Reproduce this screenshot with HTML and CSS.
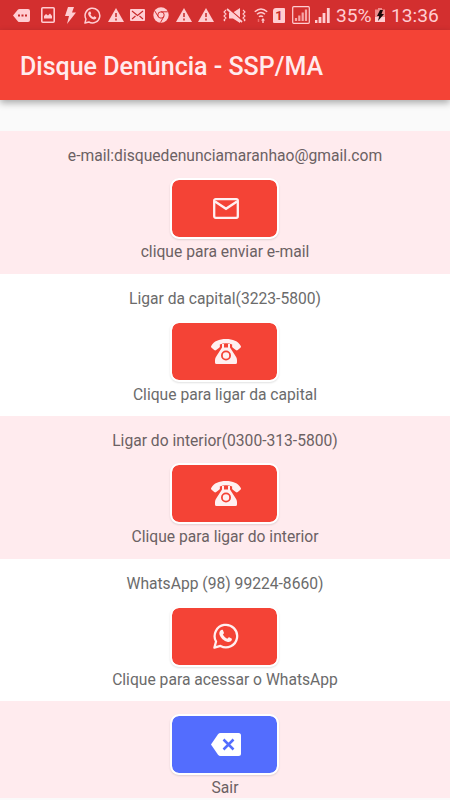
FILE: index.html
```html
<!DOCTYPE html>
<html lang="pt-BR">
<head>
  <meta charset="UTF-8" />
  <meta name="viewport" content="width=device-width, initial-scale=1.0"/>
  <title>Disque Denúncia - SSP/MA</title>
  <link rel="stylesheet" href="styles.css">
</head>
<body>

  <svg class="defs" width="0" height="0">
    <symbol id="alerta" viewBox="0 0 16 14">
      <path d="M8 0L16 14H0Z" fill="#ffcdd2"/>
      <path d="M8 5v4M8 10.5v2" stroke="#c62828" stroke-width="1.5"/>
    </symbol>
    <symbol id="whats" viewBox="0 0 24 24">
      <path d="M1.3 22.7l1.5-5.6A10.4 10.4 0 1 1 6.9 21.2Z" fill="none" stroke="currentColor" stroke-width="2.1" stroke-linejoin="round"/>
      <path d="M8.2 6.2c.5 0 .8 0 1 .6l.9 2.1c.2.5-.7 1.3-1 1.7.9 1.8 2.3 3.1 4.2 3.9.5-.5 1.1-1.5 1.6-1.3l2.2 1.1c.5.3.4 1 .1 1.7-.5 1.2-2.2 1.8-3.5 1.5-3.6-.8-6.9-4-7.800-7.200-.4-1.700.8-3.900 2.300-4.100Z" fill="currentColor"/>
    </symbol>
    <symbol id="telefone" viewBox="0 0 30 25">
      <path d="M.2 7C3 2 8 0 15 0s12 2 14.800 7c.3.700.2 1.200-.4 1.700l-2.600 2.300c-.7.600-1.300.6-2 .1l-3-2.300c-.7-.6-.8-1-.7-2l.1-1.400Q15 3.200 8.800 5.400l.1 1.400c.1 1 0 1.400-.7 2l-3 2.300c-.7.500-1.300.5-2-.1L.6 8.700C0 8.200-.1 7.700.2 7Z" fill="currentColor"/>
      <path d="M11 5h2v3.500h4V5h2v3.500l5.500 8.500q1.500 2 1.500 4v2.500q0 1.500-1.500 1.500h-19Q4 25 4 23.500V21q0-2 1.500-4L11 8.500Z" fill="currentColor"/>
      <circle cx="15" cy="16.500" r="4.100" fill="none" stroke="#f44336" stroke-width="1.800"/>
    </symbol>
  </svg>

  <div class="status">
    <svg class="ic-tag" viewBox="0 0 17 13"><path d="M0 6.500L5 .6Q5.500 0 6.500 0H15q2 0 2 2v9q0 2-2 2H6.500q-1 0-1.500-.6Z" fill="#ffcdd2"/><path d="M5 6.500h2M8.500 6.500h2M12 6.500h2" stroke="#c62828" stroke-width="2"/></svg>
    <svg class="ic-foto" viewBox="0 0 14 16"><rect x=".8" y=".8" width="12.400" height="14.400" rx="1" fill="none" stroke="#ffcdd2" stroke-width="1.600"/><path d="M3 11.500V9l2-2 2 1.500L9 6.500 11 9v2.500Z" fill="#ffcdd2"/></svg>
    <svg class="ic-raio" viewBox="0 0 11 17"><path d="M3 0h6L7 5.500h4L2 17l2-8H0Z" fill="#ffcdd2"/></svg>
    <svg class="ic-whats"><use href="#whats"/></svg>
    <svg class="ic-alerta a1"><use href="#alerta"/></svg>
    <svg class="ic-carta" viewBox="0 0 15 12"><rect width="15" height="12" rx="1" fill="#ffcdd2"/><path d="M2 2l5.500 4.500L13 2M2 10l3.500-3M13 10L9.500 7" fill="none" stroke="#c62828" stroke-width="1.100"/></svg>
    <svg class="ic-chrome" viewBox="0 0 16 16"><circle cx="8" cy="8" r="7.700" fill="#ffcdd2"/><circle cx="8" cy="8" r="3.200" fill="none" stroke="#d32f2f"/><path d="M8 4.800h6.800M5.200 9.600L1.700 3.800M10.800 9.600L7.500 15.500" stroke="#d32f2f"/></svg>
    <svg class="ic-alerta a2"><use href="#alerta"/></svg>
    <svg class="ic-alerta a3"><use href="#alerta"/></svg>
    <svg class="ic-mudo" viewBox="0 0 23 15"><path d="M6 4.500h4L17 0v15l-7-4.500H6Z" fill="#ffcdd2"/><path d="M5 .2l14 12" stroke="#d32f2f" stroke-width="1.500"/><path d="M4 1l15 13" stroke="#ffcdd2" stroke-width="1.700"/><path d="M3 2L1 4l2 2-2 2 2 2-2 2 1 1M20 2l2 2-2 2 2 2-2 2 2 2-1 1" fill="none" stroke="#ffcdd2" stroke-width="1.100"/></svg>
    <svg class="ic-wifi" viewBox="0 0 14 15"><path d="M.8 3.800q6.200-5.600 12.400 0M3 6.300q4-3.500 8 0M5 8.800q2-1.700 4 0" fill="none" stroke="#ffcdd2" stroke-width="1.500"/><path d="M4.500 11v3" stroke="#ef6b6b" stroke-width="1.500"/><path d="M7 12.500l2-2.500 2 2.500H9.700V15H8.300v-2.500Z" fill="#ffcdd2"/></svg>
    <span class="sim">1</span>
    <svg class="ic-sinal-box" viewBox="0 0 18 18"><rect x=".7" y=".7" width="16.600" height="16.600" rx="1" fill="none" stroke="#ffcdd2" stroke-width="1.200"/><path d="M4 15v-3M7.300 15V9.500M10.700 15V6.500M14 15V3.500" stroke="#f7a5a8" stroke-width="2.200"/></svg>
    <svg class="ic-sinal" viewBox="0 0 15 15"><path d="M1 15v-3M5 15V9M9 15V5M13.300 15V0" stroke="#ffcdd2" stroke-width="2.800"/></svg>
    <span class="carga">35%</span>
    <svg class="ic-bateria" viewBox="0 0 10 14"><path d="M3 0h4v1.500h3V14H0V1.500h3Z" fill="#ef8b8b"/><path d="M0 9h10v5H0Z" fill="#ffcdd2"/><path d="M5 2h3L6.500 6H9l-6 7 1.200-5H2Z" fill="#1c0808"/></svg>
    <span class="hora">13:36</span>
  </div>

  <header class="barra">
    <h1>Disque Denúncia - SSP/MA</h1>
  </header>

  <main class="lista">
    <section class="item rosa">
      <p>e-mail:disquedenunciamaranhao@gmail.com</p>
      <button><svg class="g-email" viewBox="0 0 26 21"><rect x="1.200" y="1.200" width="23.600" height="18.600" rx="1.500" fill="none" stroke="currentColor" stroke-width="2.300"/><path d="M2 3.500l11 7.300 11-7.300" fill="none" stroke="currentColor" stroke-width="2.500"/></svg></button>
      <p>clique para enviar e-mail</p>
    </section>

    <section class="item">
      <p>Ligar da capital(3223-5800)</p>
      <button><svg class="g-fone"><use href="#telefone"/></svg></button>
      <p>Clique para ligar da capital</p>
    </section>

    <section class="item rosa">
      <p>Ligar do interior(0300-313-5800)</p>
      <button><svg class="g-fone"><use href="#telefone"/></svg></button>
      <p>Clique para ligar do interior</p>
    </section>

    <section class="item">
      <p>WhatsApp (98) 99224-8660)</p>
      <button><svg class="g-whats"><use href="#whats"/></svg></button>
      <p>Clique para acessar o WhatsApp</p>
    </section>

    <section class="item rosa sair">
      <button><svg class="g-sair" viewBox="0 0 30 23"><path d="M0 11.500L7 1.300Q8 0 9.500 0H27.500Q30 0 30 2.500v18q0 2.500-2.500 2.500H9.500Q8 23 7 21.700Z" fill="#fff"/><path d="M12.500 6.500l10 10M22.500 6.500l-10 10" stroke="#536dfe" stroke-width="2.500"/></svg></button>
      <p>Sair</p>
    </section>
  </main>

</body>
</html>
```

FILE: styles.css
```css
body {
  margin: 0;
  height: 800px;
  overflow: hidden;
  background: #fafafa;
  font-family: Roboto, sans-serif;
}
svg {
  display: block;
  flex: none;
}
.defs {
  position: absolute;
}

/* barra de status */
.status {
  display: flex;
  align-items: center;
  height: 30px;
  background: #d32f2f;
  color: #ffcdd2;
  white-space: nowrap;
}
.ic-tag { width: 17px; height: 13px; margin-left: 13px; }
.ic-foto { width: 14px; height: 16px; margin-left: 11px; }
.ic-raio { width: 11px; height: 17px; margin-left: 10px; }
.ic-whats { width: 17px; height: 17px; margin-left: 8px; }
.ic-alerta { width: 16px; height: 14px; }
.a1 { margin-left: 7px; }
.ic-carta { width: 15px; height: 12px; margin-left: 6px; }
.ic-chrome { width: 16px; height: 16px; margin-left: 8px; }
.a2 { margin-left: 7px; }
.a3 { margin-left: 6px; }
.ic-mudo { width: 23px; height: 15px; margin-left: 9px; }
.ic-wifi { width: 14px; height: 15px; margin-left: 8px; }
.sim {
  width: 12px;
  height: 15px;
  margin-left: 5px;
  border-radius: 3px 1px 1px 1px;
  background: #ffcdd2;
  color: #c62828;
  font-size: 13px;
  font-weight: 700;
  line-height: 15px;
  text-align: center;
}
.ic-sinal-box { width: 18px; height: 18px; margin-left: 7px; }
.ic-sinal { width: 15px; height: 15px; margin-left: 5px; }
.carga, .hora {
  font-size: 19.2px;
  line-height: 31px;
}
.carga {
  width: 35px;
  margin-left: 6px;
}
.ic-bateria { width: 10px; height: 14px; margin-left: 4px; }
.hora { margin-left: 6px; }

.barra {
  display: flex;
  align-items: center;
  height: 70px;
  padding: 0 20px;
  background: #f44336;
  box-shadow: 0 3px 7px rgba(0, 0, 0, 0.32);
}
h1 {
  margin: 3px 0 0;
  color: #ffebee;
  font-size: 25px;
  font-weight: 500;
}

.lista {
  padding-top: 31px;
}
.item {
  display: flex;
  flex-direction: column;
  align-items: center;
  box-sizing: border-box;
  height: 142.5px;
  padding-top: 15px;
  background: #fff;
}
.item p {
  margin: 0;
  color: #6b6b6b;
  font-size: 15.65px;
  line-height: 19px;
}
.rosa {
  background: #ffebee;
}
.rosa p {
  color: #6b6163;
}
button {
  display: flex;
  align-items: center;
  justify-content: center;
  box-sizing: border-box;
  width: 109px;
  height: 61px;
  margin: 13px 1px 3px 0;
  padding: 0 0 0 2px;
  border: 2px solid #fff;
  border-radius: 9px;
  background: #f44336;
  background-clip: padding-box;
  box-shadow: 0 1px 2px rgba(0, 0, 0, 0.12);
  color: #fff0f1;
}
.g-email { width: 26px; height: 21px; }
.g-fone { width: 30px; height: 25px; }
.g-whats { width: 26px; height: 26px; }
.g-sair { width: 30px; height: 23px; }

.sair {
  height: 97px;
  padding-top: 0;
}
.sair button {
  background-color: #536dfe;
}
```
